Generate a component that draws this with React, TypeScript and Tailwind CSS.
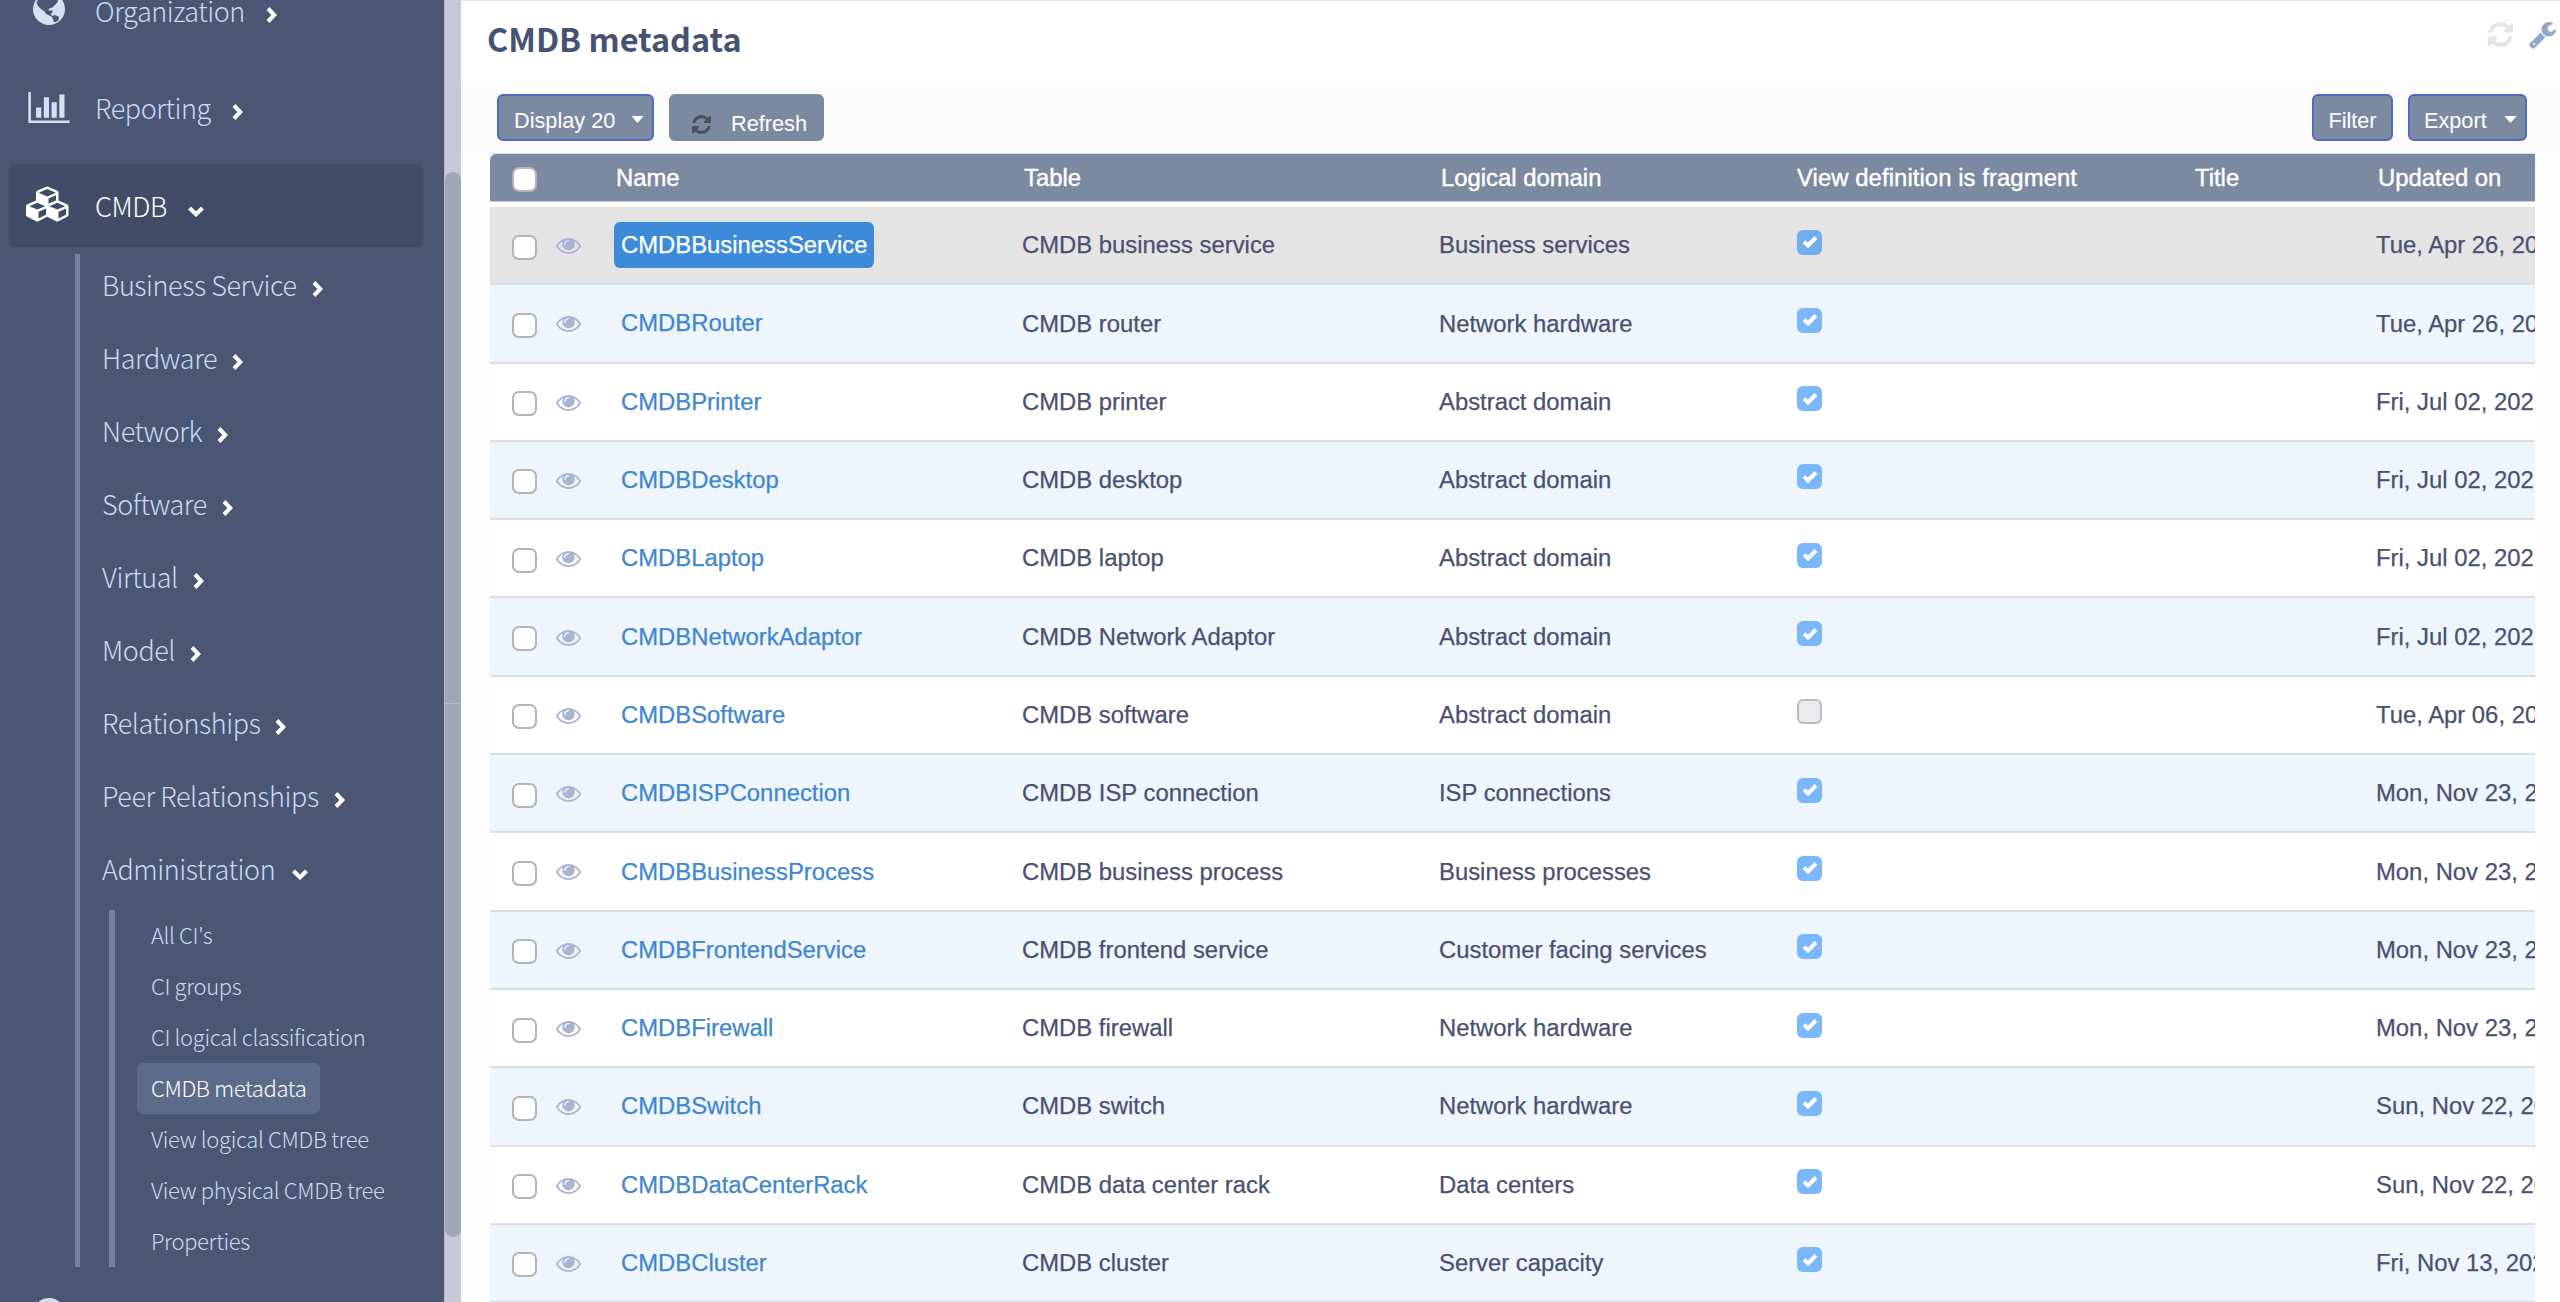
import React from 'react';
import clsx from 'clsx';

interface IconProps {
  className?: string;
}

interface MenuItem {
  label: string;
  open?: boolean;
}

interface MetadataRow {
  name: string;
  table: string;
  domain: string;
  fragment: boolean;
  updated: string;
}

const menuItems: MenuItem[] = [
  { label: 'Business Service' },
  { label: 'Hardware' },
  { label: 'Network' },
  { label: 'Software' },
  { label: 'Virtual' },
  { label: 'Model' },
  { label: 'Relationships' },
  { label: 'Peer Relationships' },
  { label: 'Administration', open: true },
];

const adminItems = [
  "All CI's",
  'CI groups',
  'CI logical classification',
  'CMDB metadata',
  'View logical CMDB tree',
  'View physical CMDB tree',
  'Properties',
];

const rows: MetadataRow[] = [
  { name: 'CMDBBusinessService', table: 'CMDB business service', domain: 'Business services', fragment: true, updated: 'Tue, Apr 26, 2022' },
  { name: 'CMDBRouter', table: 'CMDB router', domain: 'Network hardware', fragment: true, updated: 'Tue, Apr 26, 2022' },
  { name: 'CMDBPrinter', table: 'CMDB printer', domain: 'Abstract domain', fragment: true, updated: 'Fri, Jul 02, 2021' },
  { name: 'CMDBDesktop', table: 'CMDB desktop', domain: 'Abstract domain', fragment: true, updated: 'Fri, Jul 02, 2021' },
  { name: 'CMDBLaptop', table: 'CMDB laptop', domain: 'Abstract domain', fragment: true, updated: 'Fri, Jul 02, 2021' },
  { name: 'CMDBNetworkAdaptor', table: 'CMDB Network Adaptor', domain: 'Abstract domain', fragment: true, updated: 'Fri, Jul 02, 2021' },
  { name: 'CMDBSoftware', table: 'CMDB software', domain: 'Abstract domain', fragment: false, updated: 'Tue, Apr 06, 2021' },
  { name: 'CMDBISPConnection', table: 'CMDB ISP connection', domain: 'ISP connections', fragment: true, updated: 'Mon, Nov 23, 2020' },
  { name: 'CMDBBusinessProcess', table: 'CMDB business process', domain: 'Business processes', fragment: true, updated: 'Mon, Nov 23, 2020' },
  { name: 'CMDBFrontendService', table: 'CMDB frontend service', domain: 'Customer facing services', fragment: true, updated: 'Mon, Nov 23, 2020' },
  { name: 'CMDBFirewall', table: 'CMDB firewall', domain: 'Network hardware', fragment: true, updated: 'Mon, Nov 23, 2020' },
  { name: 'CMDBSwitch', table: 'CMDB switch', domain: 'Network hardware', fragment: true, updated: 'Sun, Nov 22, 2020' },
  { name: 'CMDBDataCenterRack', table: 'CMDB data center rack', domain: 'Data centers', fragment: true, updated: 'Sun, Nov 22, 2020' },
  { name: 'CMDBCluster', table: 'CMDB cluster', domain: 'Server capacity', fragment: true, updated: 'Fri, Nov 13, 2020' },
];

const GRID = 'grid grid-cols-[124px_408px_417px_358px_398px_181px_400px] w-[2286px]';

const GlobeIcon = ({ className }: IconProps) => (
  <svg viewBox="0 0 32 32" className={className}>
    <circle cx="16" cy="16" r="16" fill="#d3e0f1" />
    <path
      d="M7 3.2 10 2l5-.6 3.500.8L22 3l2.200 2.500.8 3-2.500 3-3.500 3.200-3 .8-.3 2.200 3.500-.5.3 2.500-2 1.200 2 2 2.500-1 4 2-.4 3-3 2.400-2-.6-.5-2.400-1.400-2.600-3.200-1.800-2.400-1-2-3.200-2-.8L5 13l-1.500-3.500z"
      fill="#4a5673"
    />
  </svg>
);

const BarChartIcon = ({ className }: IconProps) => (
  <svg viewBox="0 128 2048 1536" fill="currentColor" className={className}>
    <path d="M640 896v512H384V896zM1024 384v1024H768V384zM2048 1536v128H0V128h128v1408zM1408 640v768h-256V640zM1792 256v1152h-256V256z" />
  </svg>
);

const CubesIcon = ({ className }: IconProps) => (
  <svg viewBox="0 0 2304 1792" fill="currentColor" className={className}>
    <path d="M640 1632l384-192v-314l-384 164v342zm-64-454l404-173-404-173-404 173zm1088 454l384-192v-314l-384 164v342zm-64-454l404-173-404-173-404 173zm-448-293l384-165v-266l-384 164v267zm-64-379l441-189-441-189-441 189zm1088 518v416q0 36-19 67t-52 47l-448 224q-25 14-57 14t-57-14l-448-224q-4-2-7-4-2 2-7 4l-448 224q-25 14-57 14t-57-14l-448-224q-33-16-52-47t-19-67v-416q0-38 21.500-70t56.500-48l434-186v-400q0-38 21.500-70t56.500-48l448-192q23-10 50-10t50 10l448 192q35 16 56.500 48t21.500 70v400l434 186q36 16 57 48t21 70z" />
  </svg>
);

const SyncIcon = ({ className }: IconProps) => (
  <svg viewBox="128 128 1536 1536" fill="currentColor" className={className}>
    <path d="M1639 1056q0 5-1 7-64 268-268 434.500t-478 166.500q-146 0-282.500-55t-243.500-157l-129 129q-19 19-45 19t-45-19-19-45v-448q0-26 19-45t45-19h448q26 0 45 19t19 45-19 45l-137 137q71 66 161 102t187 36q134 0 250-65t186-179q11-17 53-117 8-23 30-23h192q13 0 22.500 9.500t9.500 22.500zm25-800v448q0 26-19 45t-45 19h-448q-26 0-45-19t-19-45 19-45l138-138q-148-137-349-137-134 0-250 65t-186 179q-11 17-53 117-8 23-30 23h-199q-13 0-22.500-9.500t-9.500-22.500v-7q65-268 270-434.500t480-166.500q146 0 284 55.500t245 156.500l130-129q19-19 45-19t45 19 19 45z" />
  </svg>
);

const WrenchIcon = ({ className }: IconProps) => (
  <svg viewBox="64 128 1664 1664" fill="currentColor" className={className}>
    <path d="M448 1472q0-26-19-45t-45-19-45 19-19 45 19 45 45 19 45-19 19-45zm644-420l-682 682q-37 37-90 37-52 0-91-37l-106-108q-38-36-38-90 0-53 38-91l681-681q39 98 114.500 173.500t173.500 114.500zm634-435q0 39-23 106-47 134-164.500 217.500t-258.500 83.500q-185 0-316.500-131.500t-131.500-316.500 131.500-316.500 316.500-131.500q58 0 121.500 16.500t107.500 46.500q16 11 16 28t-16 28l-293 169v224l193 107q5-3 79-48.500t135.500-81 70.500-35.500q15 0 23.500 10t8.500 25z" />
  </svg>
);

const EyeIcon = ({ className }: IconProps) => (
  <svg viewBox="0 384 1792 1152" fill="currentColor" className={className}>
    <path d="M1664 960q-152-236-381-353 61 104 61 225 0 185-131.500 316.500t-316.500 131.500-316.500-131.500-131.500-316.500q0-121 61-225-229 117-381 353 133 205 333.500 326.500t434.500 121.500 434.500-121.500 333.500-326.500zm-720-384q0-20-14-34t-34-14q-125 0-214.500 89.500t-89.500 214.500q0 20 14 34t34 14 34-14 14-34q0-86 61-147t147-61q20 0 34-14t14-34zm848 384q0 34-20 69-140 230-376.500 368.500t-499.500 138.500-499.500-139-376.500-368q-20-35-20-69t20-69q140-229 376.500-368t499.500-139 499.500 139 376.500 368q20 35 20 69z" />
  </svg>
);

const Chevron = ({ open, className }: { open?: boolean; className?: string }) =>
  open ? (
    <svg viewBox="0 0 16 11" className={clsx('h-[11px] w-4 shrink-0', className)}>
      <path d="M1.500 2 8 8.300 14.500 2" fill="none" stroke="#fff" strokeWidth="4" />
    </svg>
  ) : (
    <svg viewBox="0 0 11 16" className={clsx('h-4 w-[11px] shrink-0', className)}>
      <path d="M2 1.500 8.300 8 2 14.500" fill="none" stroke="#fff" strokeWidth="4" />
    </svg>
  );

const Caret = () => (
  <svg viewBox="0 0 14 8" className="h-[7px] w-[13px]">
    <path d="M0 0h14L7 8z" fill="#fff" />
  </svg>
);

const Checkbox = ({ className }: IconProps) => (
  <span className={clsx('block size-[25px] rounded-[7px] border-2 border-[#b1b4b9] bg-white', className)} />
);

const FragmentBox = ({ checked, dim }: { checked: boolean; dim: boolean }) =>
  checked ? (
    <span className={clsx('flex size-[25px] items-center justify-center rounded-[6px]', dim ? 'bg-[#70aeee]' : 'bg-[#7ab7fc]')}>
      <svg viewBox="0 0 16 12" className="h-3 w-4">
        <path d="M2 5.600 6 9.500 14 1.500" fill="none" stroke="#fff" strokeWidth="4" />
      </svg>
    </span>
  ) : (
    <span className="block size-[25px] rounded-[6px] border-2 border-[#bbbcc0] bg-[#e9eaed]" />
  );

function TopItem({ label, icon, open, active }: MenuItem & { icon: React.ReactNode; active?: boolean }) {
  return (
    <div
      className={clsx(
        'mb-[14.5px] ml-[9px] flex h-[83px] w-[414px] shrink-0 items-center rounded-[6px]',
        active ? 'bg-[#414c66] text-white' : 'text-[#c9d9f2]'
      )}
    >
      <div className="flex w-[86px] pl-[17px]">{icon}</div>
      <span className="mr-[21px]">{label}</span>
      <Chevron open={open} className={open ? 'mt-3' : 'mt-2'} />
    </div>
  );
}

function Sidebar() {
  return (
    <aside className="flex h-full w-[444px] shrink-0 flex-col overflow-hidden bg-[#4a5673] font-['Noto_Sans_CJK_SC',sans-serif] text-[27px] leading-9 font-light tracking-[-0.45px] whitespace-nowrap">
      <div className="-mt-[31px] flex flex-col">
        <TopItem label="Organization" icon={<GlobeIcon className="mb-[3px] ml-[7px] size-8" />} />
        <TopItem label="Reporting" icon={<BarChartIcon className="mb-0.5 ml-0.5 h-[31px] w-[42px] text-[#d3e0f1]" />} />
        <TopItem label="CMDB" open active icon={<CubesIcon className="mb-1 h-[36px] w-[45px]" />} />
      </div>

      {/* CMDB submenu */}
      <div className="-mt-[7.5px] ml-[75px] flex h-[1013px] shrink-0 flex-col border-l-[5px] border-[#74829f] text-[#c9d9f2]">
        {menuItems.map((item) => (
          <div key={item.label} className="flex h-[72.9px] shrink-0 items-center pl-[22px]">
            <span className={clsx('pb-[10px]', item.open ? 'mr-[17px]' : 'mr-[15px]')}>{item.label}</span>
            <Chevron open={item.open} className={item.open ? 'mt-0.5' : 'mb-0.5'} />
          </div>
        ))}
        <div className="ml-[29px] flex h-[357px] flex-col items-start border-l-[6px] border-[#74829f] pl-[22px] text-[22px] tracking-[-0.35px]">
          {adminItems.map((item) => (
            <div
              key={item}
              className={clsx(
                'flex h-[51px] items-center rounded-[6px] px-[14px] pb-1',
                item === 'CMDB metadata' && 'bg-[#5d6b8a] text-white'
              )}
            >
              {item}
            </div>
          ))}
        </div>
      </div>
      <div className="mt-[31px] ml-[33px] size-8 shrink-0 rounded-full bg-[#d3e0f1]" />
    </aside>
  );
}

function Toolbar() {
  return (
    <div className="flex h-[71px] items-start bg-[#fcfcfd] pt-3 pr-[33px] pl-[36px] text-[21.7px] text-white">
      <button className="flex h-[47px] w-[157px] items-center rounded-[6px] border-2 border-[#5068c6] bg-[#7b8aa1] pt-[7px] pl-[15px]">
        Display 20
        <span className="mb-1 ml-[16px]">
          <Caret />
        </span>
      </button>
      <button className="ml-[15px] flex h-[47px] w-[155px] items-center rounded-[6px] bg-[#7b8aa1] pt-[13px] pl-[23px]">
        <SyncIcon className="size-[19px] text-[#47525f]" />
        <span className="ml-[20px]">Refresh</span>
      </button>
      <button className="ml-auto h-[47px] w-[81px] rounded-[6px] border-2 border-[#5068c6] bg-[#7b8aa1] pt-[7px]">
        Filter
      </button>
      <button className="ml-[15px] flex h-[47px] w-[119px] items-center rounded-[6px] border-2 border-[#5068c6] bg-[#7b8aa1] pt-[7px] pl-[14px]">
        Export
        <span className="mb-1 ml-[17px]">
          <Caret />
        </span>
      </button>
    </div>
  );
}

function MetadataTable() {
  return (
    <div className="ml-[29px] flex w-[2045px] flex-col overflow-hidden border-t border-[#dfe2e6] text-[23.85px] whitespace-nowrap text-[#4a5170] [-webkit-text-stroke:0.25px]">
      <div className={clsx(GRID, 'mb-[5px] h-12 shrink-0 items-center rounded-tl-[6px] border-b border-[#c3cad5] bg-[#7b8aa1] text-white [-webkit-text-stroke:0.4px]')}>
        <Checkbox className="mt-1 ml-[22px]" />
        <span className="pl-[2px]">Name</span>
        <span className="pl-[2px]">Table</span>
        <span className="pl-[2px]">Logical domain</span>
        <span className="tracking-[0.08px]">View definition is fragment</span>
        <span>Title</span>
        <span className="pl-0.5">Updated on</span>
      </div>
      {rows.map((row, i) => (
        <div
          key={row.name}
          className={clsx(
            GRID,
            'h-[78.3px] shrink-0 items-center border-b-2 border-[#dbdfe3]',
            i === 0 ? 'bg-[#e4e4e4]' : i % 2 ? 'bg-[#eff5fc]' : 'bg-white'
          )}
        >
          <div className="flex items-center pt-1 pl-[22px]">
            <Checkbox />
            <EyeIcon className="mb-0.5 ml-[19px] h-4 w-[25px] text-[#a9b4d2]" />
          </div>
          <div>
            <span
              className={clsx(
                'inline-flex h-[46px] items-center rounded-[6px] px-[7px]',
                i === 0 ? 'bg-[#3c8ad8] text-white' : 'text-[#3f87d0]'
              )}
            >
              {row.name}
            </span>
          </div>
          <span>{row.table}</span>
          <span>{row.domain}</span>
          <div className="pb-[6px]">
            <FragmentBox checked={row.fragment} dim={i === 0} />
          </div>
          <span />
          <span>{row.updated}</span>
        </div>
      ))}
    </div>
  );
}

export default function App() {
  return (
    <div className="flex h-[1302px] w-[2560px] overflow-hidden bg-white font-['Liberation_Sans',Arial,sans-serif]">
      <Sidebar />

      {/* Sidebar scrollbar */}
      <div className="flex w-[17px] shrink-0 flex-col border-l border-[#b4bbca] bg-[#c8c9d6] pt-[172px]">
        <div className="h-[532px] rounded-t-[8px] border-b border-[#b9bdc7] bg-[#a2a8b3]" />
        <div className="h-[533px] rounded-b-[8px] bg-[#a2a8b3]" />
      </div>

      <main className="flex min-w-0 flex-1 flex-col border-t border-[#e2e4e6] bg-[#fdfdfe]">
        <div className="flex h-[81px] shrink-0 items-start justify-between bg-white pr-1 pl-[26px]">
          <h1 className="pt-3.5 font-['Noto_Sans_CJK_SC',sans-serif] text-[32.4px] leading-[46px] font-bold text-[#465272]">
            CMDB metadata
          </h1>
          <div className="flex gap-4 pt-[21px]">
            <SyncIcon className="size-[25px] text-[#e1e5ec]" />
            <WrenchIcon className="size-[27px] text-[#94a7c4]" />
          </div>
        </div>
        <Toolbar />
        <MetadataTable />
      </main>
    </div>
  );
}
